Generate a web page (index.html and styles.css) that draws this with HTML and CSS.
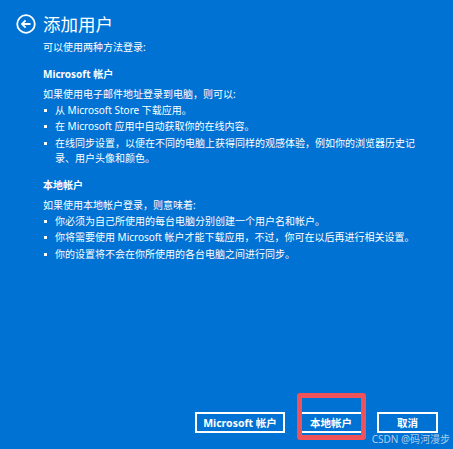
FILE: index.html
```html
<!DOCTYPE html>
<html lang="zh-CN">

<head>
    <meta charset="UTF-8" />
    <meta name="viewport" content="width=device-width, initial-scale=1.0" />
    <title>添加用户</title>
    <link rel="stylesheet" href="styles.css">
</head>

<body>
    <div class="page">
        <header class="top">
            <svg class="back" width="20" height="20" viewBox="0 0 20 20">
                <circle cx="10" cy="10" r="8.8" fill="none" stroke="#fff" stroke-width="1.8" />
                <path d="M14.5 10H6.2M9.6 6.4L6 10l3.6 3.6" fill="none" stroke="#fff" stroke-width="1.8" />
            </svg>
            <h1>添加用户</h1>
        </header>

        <main class="content">
            <p class="intro">可以使用两种方法登录:</p>

            <!-- Microsoft account -->
            <h2>Microsoft 帐户</h2>
            <p>如果使用电子邮件地址登录到电脑，则可以:</p>
            <ul>
                <li>从 Microsoft Store 下载应用。</li>
                <li>在 Microsoft 应用中自动获取你的在线内容。</li>
                <li>在线同步设置，以便在不同的电脑上获得同样的观感体验，例如你的浏览器历史记录、用户头像和颜色。</li>
            </ul>

            <!-- Local account -->
            <h2>本地帐户</h2>
            <p>如果使用本地帐户登录，则意味着:</p>
            <ul>
                <li>你必须为自己所使用的每台电脑分别创建一个用户名和帐户。</li>
                <li>你将需要使用 Microsoft 帐户才能下载应用，不过，你可在以后再进行相关设置。</li>
                <li>你的设置将不会在你所使用的各台电脑之间进行同步。</li>
            </ul>
        </main>

        <footer class="actions">
            <button class="btn btn-ms">Microsoft 帐户</button>
            <button class="btn btn-local">本地帐户<span class="mark"></span></button>
            <button class="btn btn-cancel">取消</button>
        </footer>

        <div class="watermark">CSDN @码河漫步</div>
    </div>
</body>

</html>
```

FILE: styles.css
```css
* {
    margin: 0;
    padding: 0;
    box-sizing: border-box;
}

body {
    font-family: "Segoe UI", "Noto Sans", "Noto Sans CJK SC", sans-serif;
    background-color: #0072d4;
    color: #fff;
}

.page {
    position: relative;
    display: flex;
    flex-direction: column;
    height: 449px;
    padding: 11px 15px 16px 16px;
}

.top {
    display: flex;
    align-items: center;
    gap: 7px;
    height: 26px;
}

.top h1 {
    font-family: "Noto Sans CJK SC", sans-serif;
    font-size: 17.5px;
    font-weight: 400;
    line-height: 26px;
}

.content {
    padding-left: 27px;
    font-size: 10px;
    line-height: 15px;
}

.intro {
    margin-top: 2.5px;
}

.content h2 {
    font-size: 10px;
    font-weight: 700;
    margin-top: 12px;
    margin-bottom: 5px;
}

.content ul {
    list-style: none;
    margin-top: 1px;
    padding-right: 16px;
}

.content li {
    position: relative;
    padding-left: 12px;
    margin-bottom: 1.5px;
}

.content li::before {
    content: "";
    position: absolute;
    left: 1px;
    top: 6px;
    width: 3px;
    height: 3px;
    background-color: #fff;
}

.actions {
    display: flex;
    justify-content: flex-end;
    gap: 14px;
    margin-top: auto;
}

.btn {
    position: relative;
    height: 21px;
    border: 2px solid #fff;
    background: transparent;
    color: #fff;
    font-family: "Segoe UI", "Noto Sans", "Noto Sans CJK SC", sans-serif;
    font-size: 10.5px;
    font-weight: 700;
}

.btn-ms {
    width: 90px;
}

.btn-local {
    width: 64px;
}

.btn-cancel {
    width: 61px;
}

/* red highlight box */
.mark {
    position: absolute;
    left: -4px;
    right: -5px;
    top: -21px;
    bottom: -9px;
    border: 5px solid #f0525a;
    border-radius: 3px;
}

.watermark {
    position: absolute;
    right: 3px;
    bottom: 3px;
    font-size: 10px;
    color: rgba(215, 222, 235, 0.85);
}
```
